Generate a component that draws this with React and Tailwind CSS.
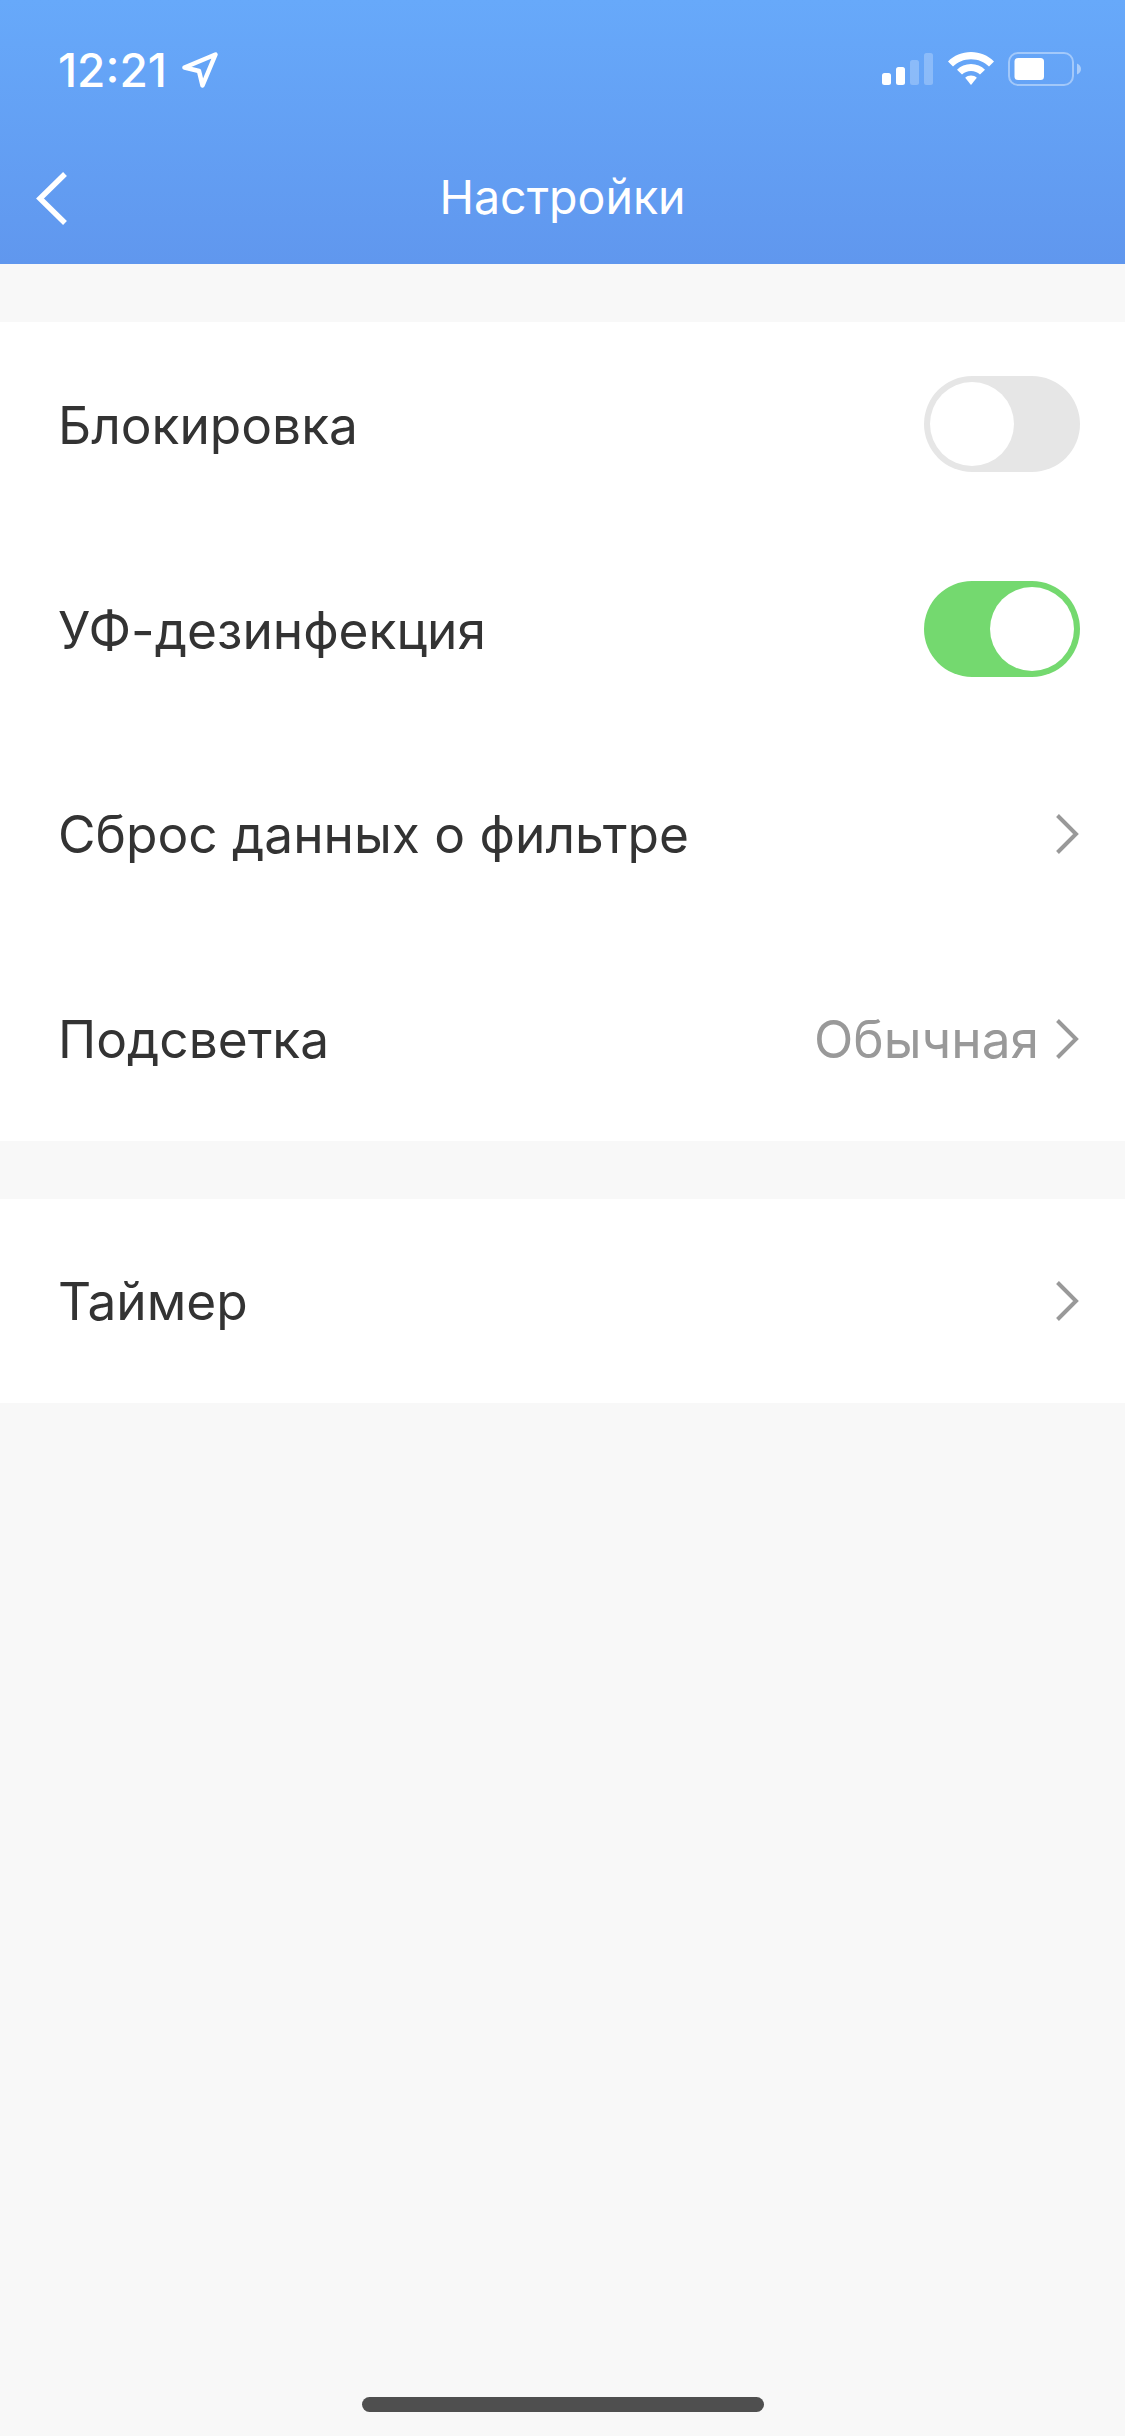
import React from "react";

function Chevron() {
  return (
    <svg width="26" height="44" viewBox="0 0 26 44" fill="none" className="shrink-0">
      <path d="M3.5 3.5 L22 22 L3.5 40.5" stroke="#999999" strokeWidth="4" />
    </svg>
  );
}

function Toggle({ on }) {
  return (
    <div
      className={`flex h-[96px] w-[156px] items-center rounded-full p-[6px] ${
        on ? "justify-end bg-[#74d96f]" : "justify-start bg-[#e6e6e6]"
      }`}
    >
      <div className="h-[84px] w-[84px] rounded-full bg-white" />
    </div>
  );
}

function Row({ label, value, toggle, chevron }) {
  return (
    <div className="flex items-center justify-between pl-[58px] pr-[45px]">
      <span className="pt-[2px] text-[51.4px] text-[#333333]">{label}</span>
      <div className="flex items-center gap-[15px]">
        {value && <span className="pt-[2px] text-[51.4px] text-[#999999]">{value}</span>}
        {toggle !== undefined && <Toggle on={toggle} />}
        {chevron && <Chevron />}
      </div>
    </div>
  );
}

function StatusIcons() {
  return (
    <div className="flex items-center">
      <svg width="52" height="34" viewBox="0 0 52 34" className="mr-[14px]">
        <rect x="0" y="21" width="9" height="12" rx="2.5" fill="#fff" />
        <rect x="14" y="15" width="9" height="18" rx="2.5" fill="#fff" />
        <rect x="28" y="8" width="9" height="25" rx="2.5" fill="#fff" fillOpacity="0.25" />
        <rect x="42" y="1" width="9" height="32" rx="2.5" fill="#fff" fillOpacity="0.25" />
      </svg>
      <svg width="46" height="34" viewBox="0 0 46 34" className="mr-[14px]">
        <path
          d="M23 0 C32 0 40 3.5 46 9.5 L41 14.5 C36.5 10 30 7.2 23 7.2 C16 7.2 9.5 10 5 14.5 L0 9.5 C6 3.5 14 0 23 0 Z"
          fill="#fff"
        />
        <path
          d="M23 12 C28.5 12 33.5 14.2 37 17.8 L32 22.6 C29.6 20.3 26.5 19 23 19 C19.5 19 16.4 20.3 14 22.6 L9 17.8 C12.5 14.2 17.5 12 23 12 Z"
          fill="#fff"
        />
        <path d="M23 23.5 C25.3 23.5 27.3 24.4 28.8 25.8 L23 33 L17.2 25.8 C18.7 24.4 20.7 23.5 23 23.5 Z" fill="#fff" />
      </svg>
      <svg width="74" height="34" viewBox="0 0 74 34">
        <rect x="1" y="1" width="64" height="32" rx="9" fill="none" stroke="#fff" strokeOpacity="0.4" strokeWidth="2" />
        <rect x="6.5" y="6" width="29.5" height="22" rx="3.5" fill="#fff" />
        <path d="M69 11.5 C71.5 12.5 73 14.5 73 17 C73 19.5 71.5 21.5 69 22.5 Z" fill="#fff" fillOpacity="0.45" />
      </svg>
    </div>
  );
}

export default function App() {
  return (
    <div
      className="flex min-h-[2436px] flex-col bg-[#f8f8f8]"
      style={{ fontFamily: "Inter, 'Noto Sans', sans-serif" }}
    >
      <header className="h-[264px] bg-gradient-to-b from-[#67a9fa] to-[#6097ee] text-white">
        <div className="flex h-[137px] items-start justify-between pl-[58px] pr-[43px] pt-[52px]">
          <div className="flex items-center gap-[15px]">
            <span className="text-[46px] leading-[34px] font-medium">12:21</span>
            <svg width="36" height="36" viewBox="0 0 36 36" fill="none">
              <path
                d="M2.5 15.5 L33.5 2.5 L20.5 33.5 L17 19 Z"
                stroke="#fff"
                strokeWidth="4.5"
                strokeLinejoin="round"
              />
            </svg>
          </div>
          <StatusIcons />
        </div>
        <div className="grid h-[120px] grid-cols-[1fr_auto_1fr] items-center pl-[36px]">
          <svg width="34" height="56" viewBox="0 0 34 56" fill="none">
            <path d="M29 5 L4 29.5 L29 54" stroke="#fff" strokeWidth="5.5" />
          </svg>
          <h1 className="-ml-[36px] pt-[2px] text-[46.5px] font-normal">Настройки</h1>
        </div>
      </header>

      <section className="mt-[58px] grid h-[819px] grid-rows-4 bg-white">
        <Row label="Блокировка" toggle={false} />
        <Row label="УФ-дезинфекция" toggle={true} />
        <Row label="Сброс данных о фильтре" chevron />
        <Row label="Подсветка" value="Обычная" chevron />
      </section>

      <section className="mt-[58px] grid h-[204px] bg-white">
        <Row label="Таймер" chevron />
      </section>

      <div className="mt-auto flex justify-center pb-[24px]">
        <div className="h-[15px] w-[402px] rounded-full bg-[#4f4f4f]" />
      </div>
    </div>
  );
}
